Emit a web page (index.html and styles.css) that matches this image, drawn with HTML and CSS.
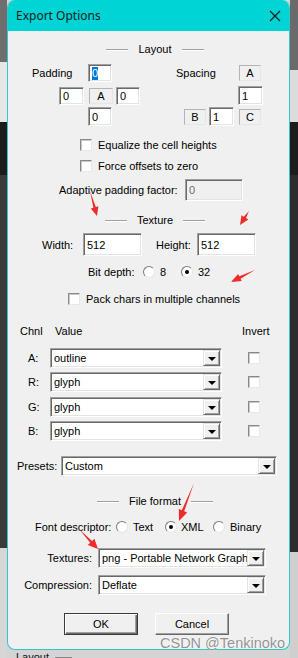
FILE: index.html
```html
<!DOCTYPE html>
<html lang="en">
<head>
  <meta charset="UTF-8" />
  <title>Export Options</title>
  <link rel="stylesheet" href="styles.css">
</head>
<body>
  <div class="window">
    <div class="titlebar">
      <span class="title">Export Options</span>
      <svg class="close" width="12" height="12" viewBox="0 0 12 12"><path d="M1 1L11 11M11 1L1 11" stroke="#1a1a1a" stroke-width="1.2" fill="none"/></svg>
    </div>

    <div class="client">
      <!-- Layout -->
      <div class="group-title gt-layout"><span>Layout</span></div>

      <div class="row pad1">
        <span class="lbl-padding">Padding</span>
        <div class="edit e24 h18"><span class="sel">0</span></div>
        <span class="lbl-spacing">Spacing</span>
        <div class="box b22">A</div>
      </div>
      <div class="row pad2">
        <div class="edit e25 h18 ml51">0</div>
        <div class="box b24 ml5">A</div>
        <div class="edit e24 h18 ml3">0</div>
        <div class="edit e25 h19 ml98">1</div>
      </div>
      <div class="row pad3">
        <div class="edit e24 h19 ml80">0</div>
        <div class="box b22 ml72">B</div>
        <div class="edit e25 h19 ml3">1</div>
        <div class="box b22 ml5">C</div>
      </div>

      <div class="row cb1">
        <span class="check ml72"></span><span class="ml6">Equalize the cell heights</span>
      </div>
      <div class="row cb2">
        <span class="check ml72"></span><span class="ml6">Force offsets to zero</span>
      </div>
      <div class="row adaptive">
        <span class="lbl-adaptive">Adaptive padding factor:</span>
        <div class="edit disabled e58 h22">0</div>
      </div>

      <!-- Texture -->
      <div class="group-title gt-texture"><span>Texture</span></div>

      <div class="row size">
        <span class="lbl-width">Width:</span>
        <div class="edit e59 h23">512</div>
        <span class="lbl-height">Height:</span>
        <div class="edit e59 h23">512</div>
      </div>
      <div class="row bitdepth">
        <span class="lbl-bits">Bit depth:</span>
        <span class="radio"></span><span class="opt-8">8</span>
        <span class="radio checked ml5"></span><span class="ml5">32</span>
      </div>
      <div class="row pack">
        <span class="check ml60"></span><span class="ml6">Pack chars in multiple channels</span>
      </div>

      <div class="row chnl-head">
        <span class="col-chnl">Chnl</span>
        <span class="col-value">Value</span>
        <span>Invert</span>
      </div>
      <div class="row chan ch-a">
        <span class="ch-lbl">A:</span>
        <div class="combo c172"><span class="val">outline</span><span class="drop"></span></div>
        <span class="check ml26"></span>
      </div>
      <div class="row chan ch-r">
        <span class="ch-lbl">R:</span>
        <div class="combo c172"><span class="val">glyph</span><span class="drop"></span></div>
        <span class="check ml26"></span>
      </div>
      <div class="row chan ch-g">
        <span class="ch-lbl">G:</span>
        <div class="combo c172"><span class="val">glyph</span><span class="drop"></span></div>
        <span class="check ml26"></span>
      </div>
      <div class="row chan ch-b">
        <span class="ch-lbl">B:</span>
        <div class="combo c172"><span class="val">glyph</span><span class="drop"></span></div>
        <span class="check ml26"></span>
      </div>

      <div class="row presets">
        <span class="lbl-presets">Presets:</span>
        <div class="combo c216"><span class="val">Custom</span><span class="drop"></span></div>
      </div>

      <!-- File format -->
      <div class="group-title gt-file"><span>File format</span></div>

      <div class="row fontdesc">
        <span class="lbl-fontdesc">Font descriptor:</span>
        <span class="radio"></span><span class="opt-text">Text</span>
        <span class="radio checked"></span><span class="opt-xml">XML</span>
        <span class="radio"></span><span class="ml5">Binary</span>
      </div>
      <div class="row textures">
        <span class="lbl-right">Textures:</span>
        <div class="combo c168"><span class="val">png - Portable Network Graphics</span><span class="drop"></span></div>
      </div>
      <div class="row compression">
        <span class="lbl-right">Compression:</span>
        <div class="combo c168"><span class="val">Deflate</span><span class="drop"></span></div>
      </div>

      <div class="row buttons">
        <div class="button default">OK</div>
        <div class="button cancel">Cancel</div>
      </div>
    </div>
  </div>
  <div class="under"><span>Layout</span><span class="under-line"></span></div>

  <div class="watermark">CSDN @Tenkinoko</div>

  <!-- red annotation arrows -->
  <svg class="arrows" width="298" height="658" viewBox="0 0 298 658">
    <polygon points="90,191 95.8,207 98.4,206.3 97,216 90.8,208.5 93.4,207.8"/>
    <polygon points="249,211 246,218.1 248.3,219.6 240,225 241.5,215.2 243.8,216.7"/>
    <polygon points="255,270 240.5,278.7 241.7,281.1 231,282 238.1,273.9 239.3,276.3"/>
    <polygon points="194,483 184.2,511.3 187.2,512.4 179,521 178.8,509.1 181.8,510.3"/>
    <polygon points="79,529 92,540.9 94.4,538.7 98,549 87.8,544.9 90.2,542.7"/>
  </svg>
</body>
</html>
```

FILE: styles.css
```css
body {
  margin: 0;
  width: 298px;
  height: 658px;
  overflow: hidden;
  position: relative;
  font-family: "Liberation Sans", Arial, sans-serif;
  font-size: 11px;
  color: #000;
  background:
    linear-gradient(#6e6e6e 0 62px, #e6e6e6 62px 122px, #1c1c1c 122px 175px, #3a3a3a 175px 548px, #d6d6d6 548px) left top / 7px 100% no-repeat,
    linear-gradient(#6a6a6a 0 70px, #dcdcdc 70px 122px, #1c1c1c 122px 175px, #2d2d2d 175px 552px, #cfcfcf 552px) right top / 8px 100% no-repeat,
    #d4d4d4;
}

.window {
  margin-left: 7px;
  width: 281px;
  border: 1px solid #33c6c6;
  border-top: 0;
  border-radius: 8px;
  background: #f0f0f0;
  overflow: hidden;
}
.titlebar {
  height: 31px;
  background: #00d4d4;
  display: flex;
  align-items: center;
  justify-content: space-between;
  padding: 0 8px 0 8px;
}
.title {
  font-family: "Noto Sans", "Liberation Sans", sans-serif;
  font-size: 12px;
  color: #1a1a1a;
}
.close {
  display: block;
}

.client {
  padding-bottom: 14px;
}
.row {
  display: flex;
  align-items: center;
  white-space: nowrap;
}

/* group headers */
.group-title {
  display: flex;
  justify-content: center;
  align-items: center;
  gap: 10px;
  height: 16px;
  padding-left: 13px;
}
.group-title::before,
.group-title::after {
  content: "";
  width: 22px;
  height: 1px;
  background: #a0a0a0;
  box-shadow: 0 1px #fff;
}

/* controls */
.edit {
  box-sizing: border-box;
  display: flex;
  align-items: center;
  padding-left: 3px;
  background: #fff;
  border: 1px solid;
  border-color: #a0a0a0 #fff #fff #a0a0a0;
  box-shadow: inset 1px 1px #696969, inset -1px -1px #e3e3e3;
}
.edit.disabled {
  background: #f0f0f0;
  color: #6d6d6d;
}
.sel {
  background: #0078d7;
  color: #fff;
  line-height: 13px;
}
.box {
  box-sizing: border-box;
  height: 16px;
  display: flex;
  align-items: center;
  justify-content: center;
  border: 1px solid;
  border-color: #b4b4b4 #e6e6e6 #e6e6e6 #b4b4b4;
}
.check {
  box-sizing: border-box;
  width: 12px;
  height: 12px;
  background: #fff;
  border: 1px solid;
  border-color: #8a8a8a #e8e8e8 #e8e8e8 #8a8a8a;
  box-shadow: inset 1px 1px #c8c8c8;
}
.radio {
  box-sizing: border-box;
  width: 12px;
  height: 12px;
  border-radius: 50%;
  background: #fff;
  border: 1px solid;
  border-color: #7a7a7a #e6e6e6 #e6e6e6 #7a7a7a;
  display: flex;
  align-items: center;
  justify-content: center;
}
.radio.checked::after {
  content: "";
  width: 4px;
  height: 4px;
  border-radius: 50%;
  background: #000;
}
.combo {
  box-sizing: border-box;
  height: 20px;
  display: flex;
  align-items: center;
  padding: 0 1px 0 3px;
  background: #fff;
  border: 1px solid;
  border-color: #a0a0a0 #fff #fff #a0a0a0;
  box-shadow: inset 1px 1px #696969, inset -1px -1px #e3e3e3;
}
.combo .val {
  flex: 1;
  overflow: hidden;
  white-space: nowrap;
}
.drop {
  box-sizing: border-box;
  width: 17px;
  height: 16px;
  flex: none;
  background: #f0f0f0;
  border: 1px solid;
  border-color: #e3e3e3 #696969 #696969 #e3e3e3;
  box-shadow: inset 1px 1px #fff, inset -1px -1px #a0a0a0;
  display: flex;
  align-items: center;
  justify-content: center;
}
.drop::after {
  content: "";
  border-left: 4px solid transparent;
  border-right: 4px solid transparent;
  border-top: 4px solid #000;
  margin-top: 1px;
}
.button {
  box-sizing: border-box;
  width: 74px;
  height: 22px;
  display: flex;
  align-items: center;
  justify-content: center;
  background: #f0f0f0;
  border: 1px solid;
  border-color: #fff #696969 #696969 #fff;
  box-shadow: inset -1px -1px #a0a0a0;
}
.button.default {
  margin-left: 56px;
  border: 1px solid #3a3a3a;
  box-shadow: inset 1px 1px #fff, inset -1px -1px #696969, inset -2px -2px #a0a0a0;
}
.button.cancel {
  margin-left: 17px;
}

/* sizes */
.e24 { width: 24px; }
.e25 { width: 25px; }
.e58 { width: 58px; }
.e59 { width: 59px; }
.h18 { height: 18px; }
.h19 { height: 19px; }
.h22 { height: 22px; }
.h23 { height: 23px; }
.b22 { width: 22px; }
.b24 { width: 24px; }
.c168 { width: 168px; }
.c172 { width: 172px; }
.c216 { width: 216px; }
.ml3 { margin-left: 3px; }
.ml5 { margin-left: 5px; }
.ml6 { margin-left: 6px; }
.ml26 { margin-left: 26px; }
.ml51 { margin-left: 51px; }
.ml60 { margin-left: 60px; }
.ml72 { margin-left: 72px; }
.ml80 { margin-left: 80px; }
.ml98 { margin-left: 98px; }

/* rows, top to bottom */
.gt-layout { margin-top: 10px; }
.pad1 { margin-top: 7px; height: 18px; }
.pad2 { margin-top: 4px; height: 19px; }
.pad3 { margin-top: 2px; height: 19px; }
.cb1 { margin-top: 12px; height: 14px; }
.cb2 { margin-top: 7px; height: 14px; }
.adaptive { margin-top: 6px; height: 22px; }
.gt-texture { margin-top: 11px; }
.size { margin-top: 5px; height: 23px; }
.bitdepth { margin-top: 9px; height: 14px; }
.pack { margin-top: 13px; height: 14px; }
.chnl-head { margin-top: 18px; height: 14px; }
.chan { height: 20px; }
.ch-a { margin-top: 10px; }
.ch-r { margin-top: 4px; }
.ch-g { margin-top: 5px; }
.ch-b { margin-top: 4px; }
.presets { margin-top: 15px; height: 20px; }
.gt-file { margin-top: 17px; }
.fontdesc { margin-top: 11px; height: 14px; }
.textures { margin-top: 14px; height: 20px; }
.compression { margin-top: 7px; height: 20px; }
.buttons { margin-top: 18px; height: 22px; }

/* labels */
.lbl-padding { margin-left: 24px; width: 56px; }
.lbl-spacing { margin-left: 64px; width: 63px; }
.lbl-adaptive { margin-left: 51px; width: 126px; }
.lbl-width { margin-left: 34px; width: 41px; }
.lbl-height { margin-left: 14px; width: 41px; }
.lbl-bits { margin-left: 80px; width: 55px; }
.opt-8 { margin-left: 5px; width: 16px; }
.col-chnl { margin-left: 12px; width: 35px; }
.col-value { width: 187px; }
.ch-lbl { margin-left: 20px; width: 22px; }
.lbl-presets { margin-left: 9px; width: 44px; }
.lbl-fontdesc { margin-left: 27px; width: 81px; }
.opt-text { margin-left: 5px; width: 32px; }
.opt-xml { margin-left: 4px; width: 32px; }
.lbl-right { width: 84px; text-align: right; margin-right: 6px; }

/* below the dialog */
.under {
  display: flex;
  align-items: flex-start;
  gap: 6px;
  padding-left: 16px;
  height: 8px;
  overflow: hidden;
  margin-top: 1px;
  color: #111;
}
.under-line {
  width: 17px;
  height: 1px;
  margin-top: 6px;
  background: #8a8a8a;
}

.watermark {
  position: absolute;
  left: 160px;
  top: 635px;
  font-family: "Liberation Sans", Arial, sans-serif;
  font-size: 14.5px;
  color: rgba(110, 110, 110, 0.75);
  text-shadow: 0 0 1px #fff;
}
.arrows {
  position: absolute;
  left: 0;
  top: 0;
  pointer-events: none;
}
.arrows polygon {
  fill: #ee2b2b;
}
```
